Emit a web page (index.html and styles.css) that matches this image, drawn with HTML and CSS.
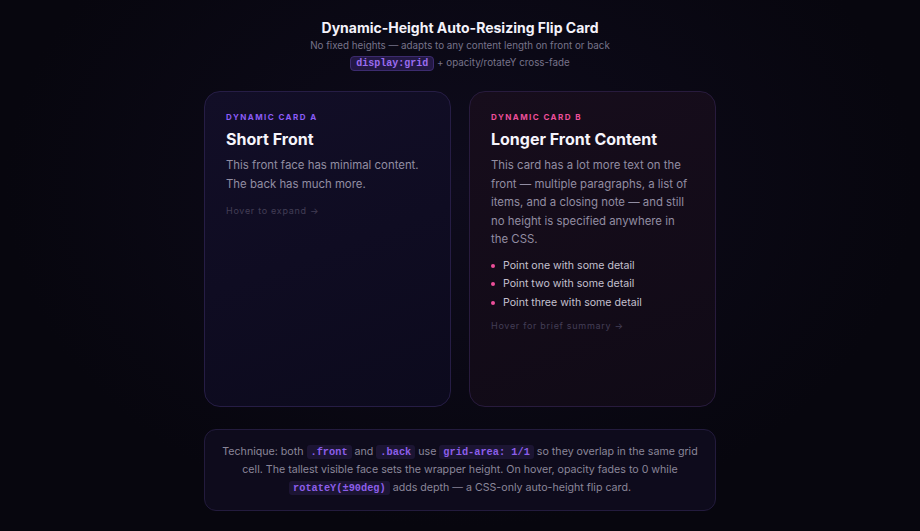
FILE: index.html
```html
<!DOCTYPE html>
<html lang="en">

<head>
    <meta charset="UTF-8">
    <title>Dynamic-Height Flip Card</title>
    <link rel="stylesheet" href="styles.css">
</head>

<body>
    <header class="page-head">
        <h1>Dynamic-Height Auto-Resizing Flip Card</h1>
        <p class="sub">No fixed heights — adapts to any content length on front or back</p>
        <p class="sub"><code>display:grid</code> + opacity/rotateY cross-fade</p>
    </header>

    <main class="cards">
        <div class="card card-a">
            <div class="front">
                <span class="tag">Dynamic Card A</span>
                <h2>Short Front</h2>
                <p>This front face has minimal content. The back has much more.</p>
                <span class="hint">Hover to expand →</span>
            </div>
        </div>

        <div class="card card-b">
            <div class="front">
                <span class="tag">Dynamic Card B</span>
                <h2>Longer Front Content</h2>
                <p>This card has a lot more text on the front — multiple paragraphs, a list of items, and a closing note — and still no height is specified anywhere in the CSS.</p>
                <ul>
                    <li>Point one with some detail</li>
                    <li>Point two with some detail</li>
                    <li>Point three with some detail</li>
                </ul>
                <span class="hint">Hover for brief summary →</span>
            </div>
        </div>
    </main>

    <section class="note">
        <p>Technique: both <code>.front</code> and <code>.back</code> use <code>grid-area: 1/1</code> so they overlap in the same grid cell. The tallest visible face sets the wrapper height. On hover, opacity fades to 0 while <code>rotateY(±90deg)</code> adds depth — a CSS-only auto-height flip card.</p>
    </section>
</body>

</html>
```

FILE: styles.css
```css
* {
    margin: 0;
    padding: 0;
    box-sizing: border-box;
}

body {
    min-height: 100vh;
    background: radial-gradient(ellipse at 50% 35%, #0e0b1c, #07060e 70%);
    color: #fff;
    font-family: 'Inter', 'Noto Sans', sans-serif;
    padding-top: 19px;
}

.page-head {
    text-align: center;
}

.page-head h1 {
    font-size: 14px;
    font-weight: 700;
    color: #f4f2fa;
    line-height: 18px;
}

.sub {
    font-size: 9.8px;
    color: #77738a;
    line-height: 16px;
    margin-top: 1px;
}

.sub code {
    display: inline-block;
    font-family: 'Liberation Mono', 'DejaVu Sans Mono', monospace;
    font-size: 10px;
    font-weight: bold;
    color: #9a6cf0;
    background: #231844;
    border: 1px solid #3c2b6e;
    border-radius: 4px;
    padding: 0 5px;
    line-height: 13px;
}

.cards {
    display: flex;
    justify-content: center;
    align-items: stretch;
    gap: 18px;
    margin-top: 20px;
}

.card {
    width: 247px;
    border-radius: 16px;
    border: 1px solid #261d45;
    padding: 19px 21px 0 21px;
    min-height: 316px;
}

.card-a {
    background: linear-gradient(160deg, #120e27, #0c0a1d);
}

.card-b {
    background: linear-gradient(160deg, #170d1c, #100a16);
    border-color: #281b3d;
}

.tag {
    display: block;
    font-size: 8px;
    font-weight: 700;
    letter-spacing: 1.45px;
    text-transform: uppercase;
    line-height: 12px;
}

.card-a .tag {
    color: #8b5cf6;
}

.card-b .tag {
    color: #ec4f9a;
}

.card h2 {
    font-size: 16px;
    font-weight: 700;
    color: #f6f4fb;
    margin-top: 5px;
    line-height: 22px;
}

.card p {
    font-size: 11.4px;
    line-height: 18.6px;
    color: #928da2;
    margin-top: 6px;
}

.card ul {
    list-style: none;
    margin-top: 8px;
}

.card li {
    font-size: 10.6px;
    line-height: 18.5px;
    color: #c4c0cf;
    padding-left: 12px;
    position: relative;
}

.card li::before {
    content: "";
    position: absolute;
    left: 0;
    top: 7px;
    width: 4px;
    height: 4px;
    border-radius: 50%;
    background: #ec4f9a;
}

.hint {
    display: block;
    font-size: 9px;
    letter-spacing: 0.7px;
    color: #433e56;
    margin-top: 12px;
}

.card-b .hint {
    margin-top: 8px;
}

.note {
    width: 512px;
    margin: 22px auto 0;
    border: 1px solid #231b3d;
    border-radius: 12px;
    background: #0e0b1c;
    padding: 13px 16px;
    text-align: center;
}

.note p {
    font-size: 10.65px;
    line-height: 18px;
    color: #8a8699;
}

.note code {
    display: inline-block;
    font-family: 'Liberation Mono', 'DejaVu Sans Mono', monospace;
    font-size: 10.3px;
    font-weight: bold;
    line-height: 14px;
    color: #8c5eea;
    background: #1c1533;
    border-radius: 3px;
    padding: 0 4px;
}
```
